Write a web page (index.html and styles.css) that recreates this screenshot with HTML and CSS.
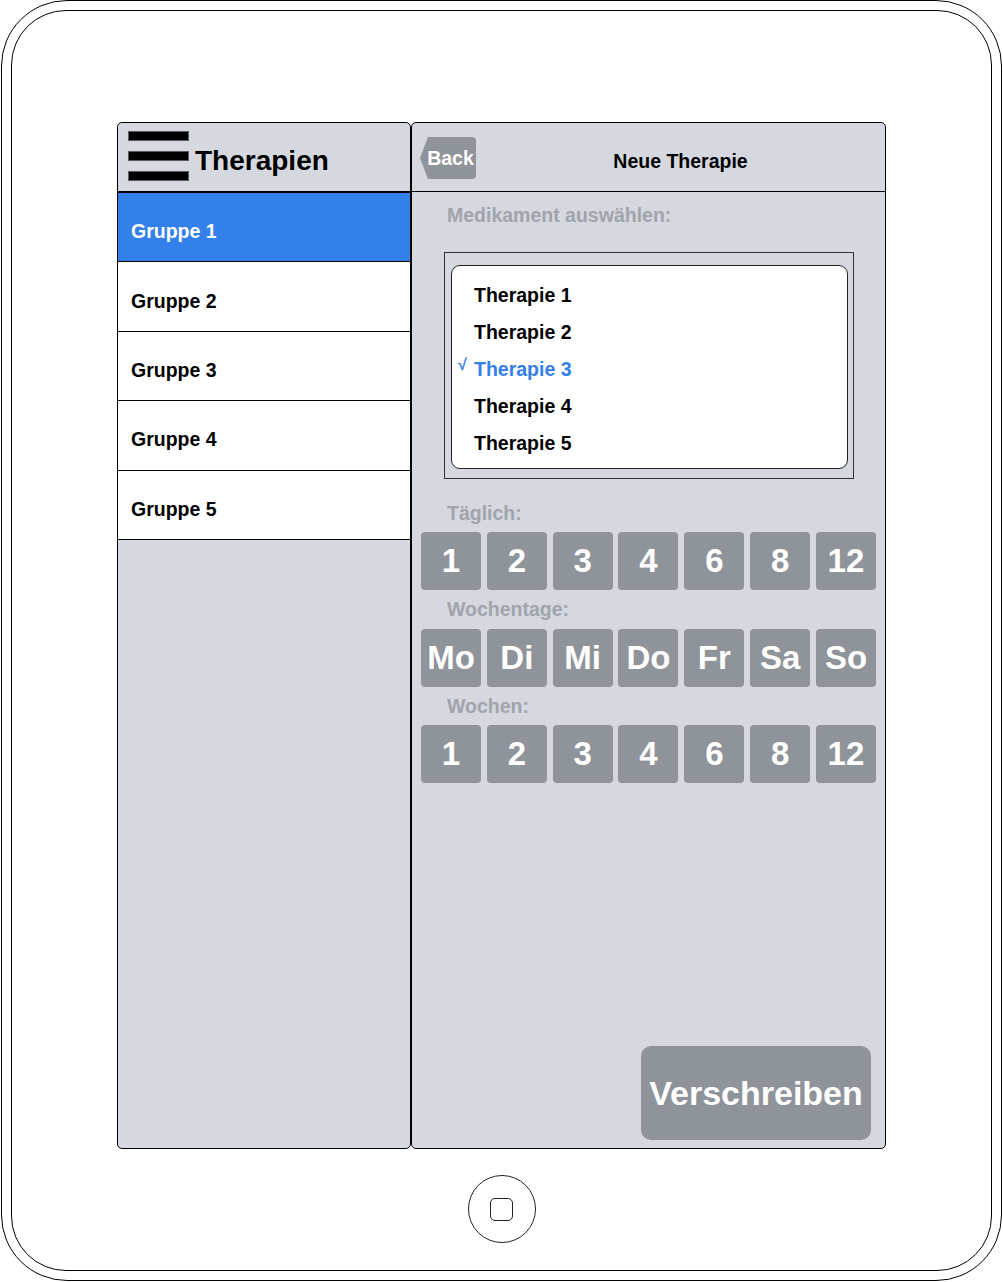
FILE: index.html
```html
<!DOCTYPE html>
<html lang="de">
<head>
<meta charset="utf-8">
<title>Therapien</title>
<link rel="stylesheet" href="styles.css">
</head>
<body>
<div class="device">
  <div class="bezel">
    <div class="screen">
      <section class="panel panel-left">
        <header class="lhead">
          <div class="burger"><span></span><span></span><span></span></div>
          <h1 class="ltitle">Therapien</h1>
        </header>
        <ul class="groups">
          <li class="group active">Gruppe 1</li>
          <li class="group">Gruppe 2</li>
          <li class="group">Gruppe 3</li>
          <li class="group">Gruppe 4</li>
          <li class="group">Gruppe 5</li>
        </ul>
      </section>
      <section class="panel panel-right">
        <header class="rhead">
          <button class="back">Back</button>
          <h2 class="rtitle">Neue Therapie</h2>
        </header>
        <div class="rbody">
          <div class="label label-top">Medikament auswählen:</div>
          <div class="picker">
            <ul class="picker-list">
              <li class="pick"><span class="check"></span><span>Therapie 1</span></li>
              <li class="pick"><span class="check"></span><span>Therapie 2</span></li>
              <li class="pick selected"><span class="check">√</span><span>Therapie 3</span></li>
              <li class="pick"><span class="check"></span><span>Therapie 4</span></li>
              <li class="pick"><span class="check"></span><span>Therapie 5</span></li>
            </ul>
          </div>
          <div class="label label-first">Täglich:</div>
          <div class="btnrow">
            <button class="btn">1</button><button class="btn">2</button><button class="btn">3</button><button class="btn">4</button><button class="btn">6</button><button class="btn">8</button><button class="btn">12</button>
          </div>
          <div class="label">Wochentage:</div>
          <div class="btnrow">
            <button class="btn">Mo</button><button class="btn">Di</button><button class="btn">Mi</button><button class="btn">Do</button><button class="btn">Fr</button><button class="btn">Sa</button><button class="btn">So</button>
          </div>
          <div class="label">Wochen:</div>
          <div class="btnrow">
            <button class="btn">1</button><button class="btn">2</button><button class="btn">3</button><button class="btn">4</button><button class="btn">6</button><button class="btn">8</button><button class="btn">12</button>
          </div>
          <button class="submit">Verschreiben</button>
        </div>
      </section>
    </div>
    <div class="home"><div class="home-sq"></div></div>
  </div>
</div>
</body>
</html>
```
FILE: styles.css
```css
html, body {
  margin: 0;
  padding: 0;
  background: #fff;
}
body {
  font-family: "Liberation Sans", Arial, sans-serif;
  width: 1003px;
  height: 1282px;
  overflow: hidden;
}
.device {
  margin-left: 1px;
  width: 1001px;
  height: 1281px;
  border: 1px solid #000;
  border-radius: 66px;
  box-sizing: border-box;
  padding: 9px;
}
.bezel {
  height: 100%;
  border: 1px solid #000;
  border-radius: 55px;
  box-sizing: border-box;
  padding-top: 111px;
}
.screen {
  display: flex;
  width: 769px;
  height: 1027px;
  margin-left: 105px;
}
.panel {
  box-sizing: border-box;
  border: 1px solid #000;
  border-radius: 5px;
  background: #d5d8df;
  display: flex;
  flex-direction: column;
  overflow: hidden;
}
.panel-left { width: 294px; }
.panel-right { width: 475px; }

.lhead {
  height: 69px;
  box-sizing: border-box;
  border-bottom: 1px solid #000;
  display: flex;
  align-items: flex-start;
  padding: 8px 0 0 10px;
}
.burger {
  display: flex;
  flex-direction: column;
  gap: 10px;
}
.burger span {
  display: block;
  width: 61px;
  height: 10px;
  background: #000;
  border: 1px solid #5a5a5a;
  box-sizing: border-box;
}
.ltitle {
  margin: 16px 0 0 6px;
  font-size: 28px;
  line-height: 28px;
  font-weight: bold;
  color: #000;
}
.groups {
  list-style: none;
  margin: 0;
  padding: 0;
}
.group {
  height: 69.4px;
  box-sizing: border-box;
  border-bottom: 1px solid #000;
  background: #fff;
  display: flex;
  align-items: center;
  padding: 9px 0 0 13px;
  font-size: 19.5px;
  font-weight: bold;
  color: #000;
}
.group:first-child {
  border-top: 1px solid #000;
  height: 70.4px;
}
.group.active {
  background: #3380ea;
  color: #fff;
}

.rhead {
  height: 69px;
  box-sizing: border-box;
  border-bottom: 1px solid #000;
  display: flex;
  align-items: flex-start;
  padding: 14px 0 0 8px;
}
.back {
  width: 56px;
  height: 42px;
  border: 0;
  border-radius: 4px;
  background: #8f939a;
  color: #fff;
  font-family: "Liberation Sans", Arial, sans-serif;
  font-size: 19.5px;
  font-weight: bold;
  padding: 0 0 0 5px;
  display: flex;
  align-items: center;
  justify-content: center;
  clip-path: polygon(8px 0, 100% 0, 100% 100%, 8px 100%, 0 50%);
}
.rtitle {
  flex: 1;
  margin: 0;
  padding-top: 3px;
  text-align: center;
  font-size: 19.5px;
  line-height: 42px;
  font-weight: bold;
  color: #000;
}
.rbody {
  flex: 1;
  display: flex;
  flex-direction: column;
  padding: 12px 0 8px 0;
}
.label {
  margin: 8px 0 8.5px 35px;
  font-size: 19.5px;
  line-height: 22px;
  font-weight: bold;
  color: #a0a4ab;
}
.label-top { margin-top: 0; margin-bottom: 0; }
.label-first { margin-top: 23px; margin-bottom: 8px; }
.picker {
  margin: 26px 0 0 32px;
  width: 410px;
  height: 227px;
  box-sizing: border-box;
  border: 1px solid #333;
  padding: 12px 5px 9px 6px;
}
.picker-list {
  height: 100%;
  box-sizing: border-box;
  background: #fff;
  border: 1px solid #222;
  border-radius: 9px;
  list-style: none;
  margin: 0;
  padding: 11px 0 0 6px;
}
.pick {
  display: flex;
  font-size: 19.5px;
  line-height: 37px;
  font-weight: bold;
  color: #000;
}
.check {
  width: 16px;
  flex: none;
  font-size: 16px;
  line-height: 16px;
  margin-top: 6px;
  align-self: flex-start;
  font-family: "Liberation Sans", "DejaVu Sans", sans-serif;
  font-weight: bold;
}
.pick.selected { color: #3380ea; }

.btnrow {
  display: flex;
  gap: 5.83px;
  margin-left: 9px;
}
.btn {
  width: 60px;
  height: 58px;
  flex: none;
  border: 0;
  border-radius: 4px;
  background: #8f939a;
  color: #fff;
  font-family: "Liberation Sans", Arial, sans-serif;
  font-size: 33px;
  font-weight: bold;
  padding: 0;
  display: flex;
  align-items: center;
  justify-content: center;
}
.submit {
  margin-top: auto;
  align-self: flex-end;
  margin-right: 14px;
  width: 230px;
  height: 94px;
  border: 0;
  border-radius: 10px;
  background: #8f939a;
  color: #fff;
  font-family: "Liberation Sans", Arial, sans-serif;
  font-size: 34px;
  font-weight: bold;
  padding: 0;
}
.home {
  width: 68px;
  height: 68px;
  margin: 26px auto 0;
  border: 1px solid #222;
  border-radius: 50%;
  box-sizing: border-box;
  display: flex;
  align-items: center;
  justify-content: center;
}
.home-sq {
  width: 23px;
  height: 23px;
  border: 1.5px solid #222;
  border-radius: 5px;
  box-sizing: border-box;
}
```
